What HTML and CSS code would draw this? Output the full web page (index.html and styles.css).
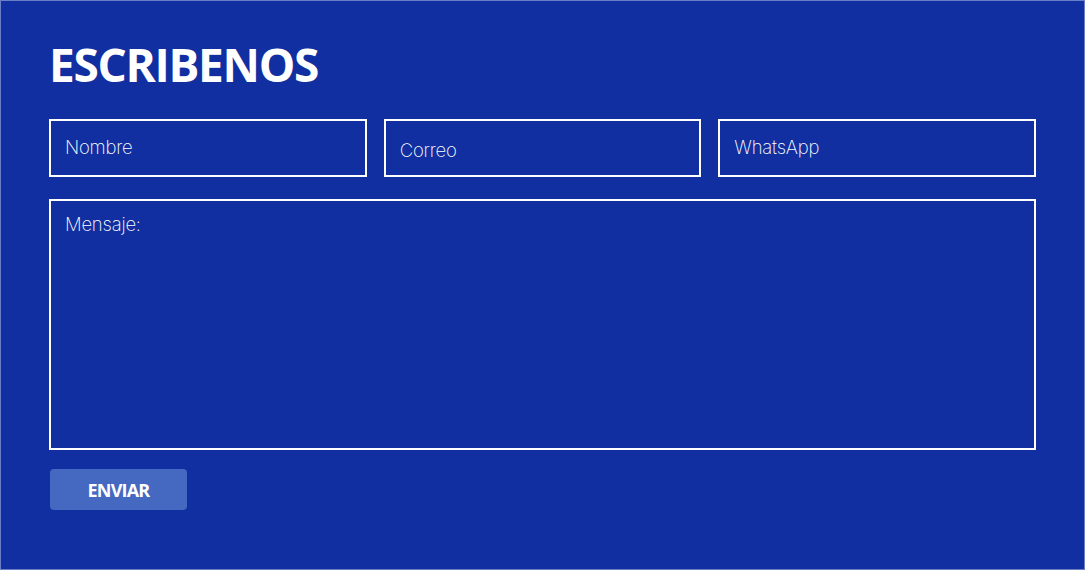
FILE: index.html
```html
<!DOCTYPE html>
<html lang="es">
<head>
<meta charset="utf-8">
<title>Escribenos</title>
<link rel="stylesheet" href="styles.css">
</head>
<body>
<main class="page">
  <h1 class="title">ESCRIBENOS</h1>
  <form class="form">
    <div class="row">
      <input class="field" type="text" placeholder="Nombre">
      <input class="field field-low" type="email" placeholder="Correo">
      <input class="field" type="tel" placeholder="WhatsApp">
    </div>
    <textarea class="message" placeholder="Mensaje:"></textarea>
    <button class="send" type="button">ENVIAR</button>
  </form>
</main>
</body>
</html>
```

FILE: styles.css
```css
html, body {
  margin: 0;
  padding: 0;
}
body {
  background: #112fa0;
}
.page {
  box-sizing: border-box;
  width: 1085px;
  height: 570px;
  border: 1px solid #6a7fc6;
  background: #112fa0;
  padding: 35px 48px 0 48px;
}
.title {
  margin: 0;
  font-family: "Open Sans", "Liberation Sans", sans-serif;
  font-weight: 700;
  font-size: 46px;
  line-height: 56px;
  color: #ffffff;
  letter-spacing: -1.3px;
}
.form {
  margin-top: 27px;
  width: 987px;
  display: flex;
  flex-direction: column;
  align-items: flex-start;
}
.row {
  display: flex;
  gap: 17px;
  width: 100%;
}
.field, .message {
  box-sizing: border-box;
  background: transparent;
  border: 2px solid #ffffff;
  border-radius: 0;
  color: #ffffff;
  font-family: "Inter", "Lato", "DejaVu Sans", sans-serif;
  font-weight: 200;
  font-size: 18.5px;
  letter-spacing: -0.2px;
  outline: none;
  margin: 0;
}
.field {
  flex: 1 1 0;
  width: 0;
  min-width: 0;
  height: 58px;
  padding: 0 14px 2px 14px;
}
.field-low {
  padding-top: 4px;
  padding-bottom: 0;
}
.field::placeholder, .message::placeholder {
  color: #ffffff;
  opacity: 1;
}
.message {
  margin-top: 22px;
  width: 100%;
  height: 251px;
  padding: 11px 14px;
  resize: none;
  line-height: 24px;
}
.send {
  margin-top: 19px;
  margin-left: 1px;
  width: 137px;
  height: 41px;
  border: none;
  border-radius: 4px;
  background: #4568c1;
  color: #ffffff;
  font-family: "Open Sans", "Liberation Sans", sans-serif;
  font-weight: 700;
  font-size: 18px;
  letter-spacing: -0.8px;
  padding: 0;
  cursor: pointer;
}
```
